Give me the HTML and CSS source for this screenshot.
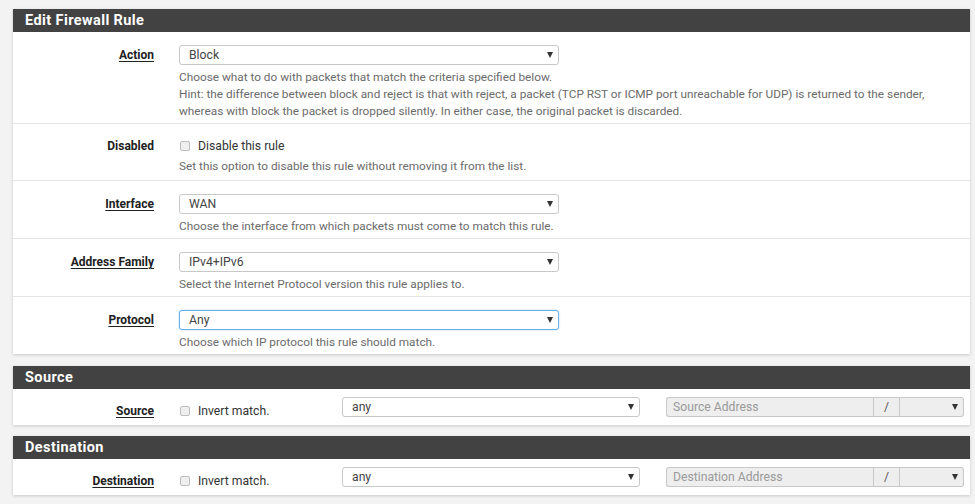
FILE: index.html
```html
<!DOCTYPE html>
<html>
<head>
<meta charset="utf-8">
<link rel="stylesheet" href="styles.css">
</head>
<body>
<div class="panel first">
  <div class="panel-heading">Edit Firewall Rule</div>
  <div class="panel-body">
    <div class="row">
      <div class="label"><span class="u">Action</span></div>
      <div class="ctl">
        <div class="select"><span>Block</span><i class="arrow"></i></div>
        <div class="help">Choose what to do with packets that match the criteria specified below.<br>Hint: the difference between block and reject is that with reject, a packet (TCP RST or ICMP port unreachable for UDP) is returned to the sender,<br>whereas with block the packet is dropped silently. In either case, the original packet is discarded.</div>
      </div>
    </div>
    <div class="row row-check">
      <div class="label">Disabled</div>
      <div class="ctl">
        <div class="check-line"><span class="cb"></span><span>Disable this rule</span></div>
        <div class="help help-tight">Set this option to disable this rule without removing it from the list.</div>
      </div>
    </div>
    <div class="row">
      <div class="label"><span class="u">Interface</span></div>
      <div class="ctl">
        <div class="select"><span>WAN</span><i class="arrow"></i></div>
        <div class="help">Choose the interface from which packets must come to match this rule.</div>
      </div>
    </div>
    <div class="row">
      <div class="label"><span class="u">Address Family</span></div>
      <div class="ctl">
        <div class="select"><span>IPv4+IPv6</span><i class="arrow"></i></div>
        <div class="help">Select the Internet Protocol version this rule applies to.</div>
      </div>
    </div>
    <div class="row last">
      <div class="label"><span class="u">Protocol</span></div>
      <div class="ctl">
        <div class="select focus"><span>Any</span><i class="arrow"></i></div>
        <div class="help">Choose which IP protocol this rule should match.</div>
      </div>
    </div>
  </div>
</div>

<div class="panel">
  <div class="panel-heading">Source</div>
  <div class="panel-body">
    <div class="row addr last">
      <div class="label lower"><span class="u">Source</span></div>
      <div class="check-line lower inv"><span class="cb"></span><span>Invert match.</span></div>
      <div class="select wide"><span>any</span><i class="arrow"></i></div>
      <div class="group">
        <div class="g-input">Source Address</div>
        <div class="g-addon">/</div>
        <div class="g-select"><i class="arrow"></i></div>
      </div>
    </div>
  </div>
</div>

<div class="panel">
  <div class="panel-heading">Destination</div>
  <div class="panel-body">
    <div class="row addr last">
      <div class="label lower"><span class="u">Destination</span></div>
      <div class="check-line lower inv"><span class="cb"></span><span>Invert match.</span></div>
      <div class="select wide"><span>any</span><i class="arrow"></i></div>
      <div class="group">
        <div class="g-input">Destination Address</div>
        <div class="g-addon">/</div>
        <div class="g-select"><i class="arrow"></i></div>
      </div>
    </div>
  </div>
</div>
</body>
</html>
```
FILE: styles.css
```css
html, body { margin: 0; padding: 0; }
body {
  background: #f3f3f3;
  font-family: Roboto, "Liberation Sans", sans-serif;
  color: #212121;
  padding: 9px 5px 0 13px;
}
.panel {
  width: 957px;
  background: #fff;
  margin-bottom: 11px;
  box-shadow: 0 1px 3px rgba(0,0,0,0.18);
}
.panel.first { margin-bottom: 12px; }
.panel-heading {
  background: #424242;
  color: #fff;
  font-weight: 700;
  font-size: 14.5px;
  letter-spacing: 0.4px;
  height: 23px;
  line-height: 23px;
  padding-left: 12px;
}
.row {
  display: grid;
  grid-template-columns: 141px 1fr;
  column-gap: 25px;
  padding: 13px 0 3px;
  border-bottom: 1px solid #e4e4e4;
}
.row.last { border-bottom: none; }
.label {
  text-align: right;
  font-weight: 700;
  font-size: 12px;
  line-height: 20px;
  color: #212121;
}
.u { text-decoration: underline; text-underline-offset: 2px; }
.select {
  width: 380px;
  height: 20px;
  box-sizing: border-box;
  border: 1px solid #c8c8c8;
  border-radius: 3px;
  background: #fff;
  display: flex;
  align-items: center;
  justify-content: space-between;
  padding: 0 0 0 9px;
  font-size: 12.2px;
  color: #444;
}
.select.focus {
  border-color: #66afe9;
  box-shadow: 0 0 2px rgba(102,175,233,0.6);
}
.arrow {
  display: block;
  width: 0;
  height: 0;
  border-left: 3px solid transparent;
  border-right: 3px solid transparent;
  border-top: 6px solid #333;
  margin-right: 5px;
}
.help {
  margin-top: 4px;
  font-size: 11.8px;
  line-height: 17px;
  color: #6b6b6b;
}
.row-check { padding: 12px 0 6px; }
.check-line {
  display: flex;
  align-items: center;
  height: 19px;
  font-size: 12.2px;
  color: #333;
}
.help-tight { margin-top: 3px; }
.row-check .help-tight { margin-bottom: -1px; }
.cb {
  width: 8px;
  height: 8px;
  border: 1px solid #bdbdbd;
  border-radius: 2px;
  background: #efefef;
  margin-left: 1px;
  margin-right: 8px;
}
.row.addr {
  grid-template-columns: 141px 188px 324px 298px;
  column-gap: 0;
  padding: 8px 0 4px;
  align-items: start;
}
.row.addr .inv { margin-left: 25px; }
.row.addr .select.wide { width: 298px; }
.lower { padding-top: 4px; }
.check-line.lower { height: 20px; padding-top: 4px; }
.group {
  display: flex;
  height: 20px;
  font-size: 12.2px;
}
.g-input {
  width: 207px;
  box-sizing: border-box;
  border: 1px solid #c8c8c8;
  border-right: none;
  border-radius: 3px 0 0 3px;
  background: #eeeeee;
  color: #9a9a9a;
  padding-left: 6px;
  line-height: 18px;
}
.g-addon {
  width: 27px;
  border: 1px solid #c8c8c8;
  background: #eeeeee;
  color: #555;
  text-align: center;
  line-height: 18px;
  box-sizing: border-box;
}
.g-select {
  width: 64px;
  border: 1px solid #c8c8c8;
  border-left: none;
  border-radius: 0 3px 3px 0;
  background: #eeeeee;
  display: flex;
  align-items: center;
  justify-content: flex-end;
  box-sizing: border-box;
}
```
